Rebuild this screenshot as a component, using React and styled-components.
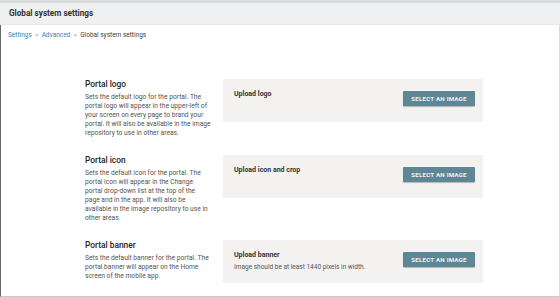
import React from "react";
import styled, { createGlobalStyle } from "styled-components";

const Global = createGlobalStyle`
  html, body { margin: 0; padding: 0; background: #ffffff; }
  body { font-family: Roboto, "Liberation Sans", Arial, sans-serif; }
  * { box-sizing: border-box; }
`;

const Page = styled.div`
  width: 560px;
  height: 297px;
  display: flex;
  flex-direction: column;
  overflow: hidden;
`;

const Header = styled.header`
  height: 25px;
  border-top: 3px solid #dcdcdf;
  background: #eef0f1;
  border-bottom: 1px solid #e6e8e9;
  display: flex;
  align-items: center;
  padding-left: 9px;
  padding-bottom: 1px;
`;

const Title = styled.h1`
  margin: 0;
  font-size: 8.2px;
  font-weight: 700;
  color: #333;
`;

const Body = styled.main`
  flex: 1;
  border-left: 1px solid #6a6a6a;
  border-right: 1px solid #dcdcdc;
  border-bottom: 1px solid #c9c9c9;
  display: flex;
  flex-direction: column;
`;

const Crumbs = styled.nav`
  padding: 6px 0 0 7px;
  font-size: 6.5px;
  color: #444;
  display: flex;
  gap: 3.5px;
  align-items: center;
`;

const Crumb = styled.span`
  color: ${(p) => (p.$link ? "#2f86b9" : "#444")};
`;

const Sep = styled.span`
  color: #777;
  font-size: 5.5px;
`;

const Rows = styled.div`
  padding: 40px 0 0 84px;
  display: flex;
  flex-direction: column;
  gap: 17px;
`;

const Row = styled.section`
  display: flex;
  align-items: flex-start;
  gap: 11px;
`;

const Info = styled.div`
  width: 127px;
  display: flex;
  flex-direction: column;
  gap: 4px;
`;

const InfoTitle = styled.h2`
  margin: 0;
  font-size: 8.4px;
  font-weight: 500;
  color: #222;
  line-height: 10px;
`;

const Desc = styled.p`
  margin: 0;
  font-size: 6.7px;
  line-height: 9px;
  color: #555;
`;

const Line = styled.span`
  display: block;
  white-space: nowrap;
`;

const Panel = styled.div`
  width: 260px;
  height: 43px;
  background: #f3f2f1;
  display: flex;
  justify-content: space-between;
  align-items: flex-start;
  padding: 10px 8px 0 11px;
`;

const PanelText = styled.div`
  display: flex;
  flex-direction: column;
  gap: 3px;
`;

const PanelTitle = styled.div`
  font-size: 7px;
  font-weight: 700;
  color: #333;
  line-height: 10px;
`;

const PanelNote = styled.div`
  font-size: 6.5px;
  color: #555;
  line-height: 8px;
`;

const Button = styled.button`
  margin-top: 2px;
  width: 72px;
  height: 15px;
  border: none;
  border-radius: 1px;
  background: #5e8796;
  color: #eef3f5;
  font-family: Roboto, "Liberation Sans", Arial, sans-serif;
  font-size: 6.2px;
  font-weight: 700;
  letter-spacing: 0.2px;
  text-transform: uppercase;
  box-shadow: 0 1px 1px rgba(0, 0, 0, 0.25);
  padding: 0;
`;

const rows = [
  {
    title: "Portal logo",
    desc: [
      "Sets the default logo for the portal. The",
      "portal logo will appear in the upper-left of",
      "your screen on every page to brand your",
      "portal. It will also be available in the image",
      "repository to use in other areas.",
    ],
    panel: "Upload logo",
  },
  {
    title: "Portal icon",
    desc: [
      "Sets the default icon for the portal. The",
      "portal icon will appear in the Change",
      "portal drop-down list at the top of the",
      "page and in the app. It will also be",
      "available in the image repository to use in",
      "other areas.",
    ],
    panel: "Upload icon and crop",
  },
  {
    title: "Portal banner",
    desc: [
      "Sets the default banner for the portal. The",
      "portal banner will appear on the Home",
      "screen of the mobile app.",
    ],
    panel: "Upload banner",
    note: "Image should be at least 1440 pixels in width.",
  },
];

export default function App() {
  return (
    <Page>
      <Global />
      <Header>
        <Title>Global system settings</Title>
      </Header>
      <Body>
        <Crumbs>
          <Crumb $link>Settings</Crumb>
          <Sep>&gt;</Sep>
          <Crumb $link>Advanced</Crumb>
          <Sep>&gt;</Sep>
          <Crumb>Global system settings</Crumb>
        </Crumbs>
        <Rows>
          {rows.map((r) => (
            <Row key={r.title}>
              <Info>
                <InfoTitle>{r.title}</InfoTitle>
                <Desc>
                  {r.desc.map((l) => (
                    <Line key={l}>{l}</Line>
                  ))}
                </Desc>
              </Info>
              <Panel>
                <PanelText>
                  <PanelTitle>{r.panel}</PanelTitle>
                  {r.note && <PanelNote>{r.note}</PanelNote>}
                </PanelText>
                <Button>Select an image</Button>
              </Panel>
            </Row>
          ))}
        </Rows>
      </Body>
    </Page>
  );
}
